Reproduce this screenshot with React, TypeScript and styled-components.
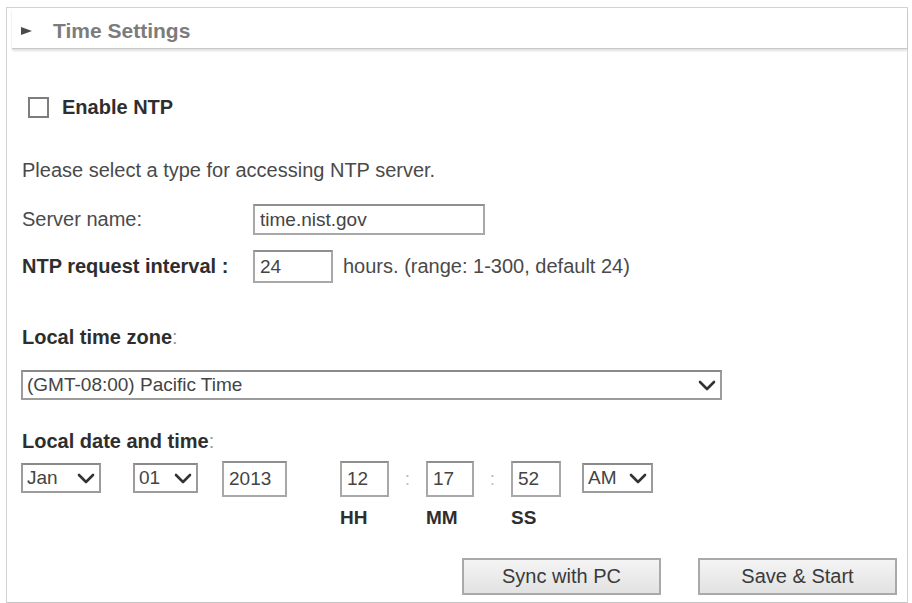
import React from 'react';
import styled, { createGlobalStyle } from 'styled-components';

const GlobalStyle = createGlobalStyle`
  html, body {
    margin: 0;
    padding: 0;
    background: #ffffff;
  }
  body {
    font-family: "Liberation Sans", Arial, sans-serif;
    color: #3a3a3a;
  }
`;

const ScPanel = styled.div`
  box-sizing: border-box;
  margin: 7px 0 0 6px;
  width: 902px;
  height: 596px;
  border: 1px solid #d2d2d2;
  border-bottom-color: #c4c4c4;
`;

const ScHeader = styled.div`
  display: flex;
  align-items: center;
  box-sizing: border-box;
  height: 41px;
  margin-left: 5px;
  padding: 6px 0 0 8px;
  border-bottom: 1px solid #c8c8c8;
  box-shadow: 0 2px 2px rgba(0, 0, 0, 0.12);
`;

const ScTriangle = styled.svg`
  width: 13px;
  height: 10px;
  margin-right: 20px;
`;

const ScTitle = styled.span`
  font-size: 21px;
  font-weight: bold;
  color: #7c7c7c;
`;

const ScContent = styled.div`
  padding: 0 10px 0 14px;
`;

const ScRow = styled.div<{ $mt: number; $h: number }>`
  display: flex;
  align-items: center;
  margin-top: ${p => p.$mt}px;
  height: ${p => p.$h}px;
  font-size: 20px;
`;

const ScCheckbox = styled.span`
  box-sizing: border-box;
  width: 21px;
  height: 21px;
  margin-left: 7px;
  margin-right: 13px;
  border: 2px solid #7d7d7d;
  background: #fff;
`;

const ScBold = styled.span`
  font-weight: bold;
  color: #2e2e2e;
`;

const ScText = styled.span<{ $ml?: number }>`
  margin-left: ${p => p.$ml ?? 0}px;
  color: #4a4a4a;
`;

const ScLabel = styled.span<{ $w: number; $bold?: boolean }>`
  box-sizing: border-box;
  width: ${p => p.$w}px;
  padding-left: 1px;
  font-weight: ${p => (p.$bold ? 'bold' : 'normal')};
  color: ${p => (p.$bold ? '#2e2e2e' : '#4a4a4a')};
`;

const ScLight = styled.span`
  color: #9a9a9a;
`;

const ScInput = styled.div<{ $w: number; $h: number }>`
  box-sizing: border-box;
  display: flex;
  align-items: center;
  width: ${p => p.$w}px;
  height: ${p => p.$h}px;
  padding-left: 5px;
  border: 2px solid #a8a8a8;
  border-top-color: #8f8f8f;
  font-size: 19px;
  color: #444;
  background: #fff;
`;

const ScSelect = styled.div<{ $w: number }>`
  box-sizing: border-box;
  display: flex;
  align-items: center;
  justify-content: space-between;
  width: ${p => p.$w}px;
  height: 30px;
  padding: 0 4px 0 4px;
  border: 2px solid #9c9c9c;
  border-top-color: #8a8a8a;
  font-size: 19px;
  color: #444;
  background: #fff;
`;

const ScChevron = styled.svg`
  width: 18px;
  height: 11px;
  flex: none;
`;

const ScDateRow = styled.div`
  display: flex;
  align-items: flex-start;
  margin-top: 10px;
`;

const ScField = styled.div<{ $ml: number }>`
  display: flex;
  flex-direction: column;
  margin-left: ${p => p.$ml}px;
`;

const ScUnit = styled.span`
  margin-top: 12px;
  font-size: 19px;
  font-weight: bold;
  color: #2e2e2e;
  line-height: 18px;
`;

const ScSelectSlot = styled.div<{ $ml: number }>`
  margin-top: 2px;
  margin-left: ${p => p.$ml}px;
`;

const ScColon = styled.span`
  width: 37px;
  height: 36px;
  display: flex;
  align-items: center;
  justify-content: center;
  font-size: 19px;
  color: #bdbdbd;
`;

const ScButtons = styled.div`
  display: flex;
  justify-content: flex-end;
  gap: 37px;
  margin-top: 31px;
`;

const ScButton = styled.button`
  box-sizing: border-box;
  width: 199px;
  height: 37px;
  border: 2px solid #a9a9a9;
  border-radius: 0;
  background: linear-gradient(#f4f4f4, #e2e2e2);
  font-family: "Liberation Sans", Arial, sans-serif;
  font-size: 20px;
  color: #3a3a3a;
  padding: 0;
`;

function Chevron(): JSX.Element {
  return (
    <ScChevron viewBox="0 0 18 11">
      <path d="M2 2 L9 9 L16 2" fill="none" stroke="#333" strokeWidth="2.6" strokeLinecap="round" strokeLinejoin="round" />
    </ScChevron>
  );
}

export default function App(): JSX.Element {
  return <>
    <GlobalStyle />
    <ScPanel>
      <ScHeader>
        <ScTriangle viewBox="0 0 13 10">
          <path d="M1 1 L12 5 L1 9 Z" fill="#4a4a4a" />
        </ScTriangle>
        <ScTitle>Time Settings</ScTitle>
      </ScHeader>
      <ScContent>
        <ScRow $mt={47} $h={22}>
          <ScCheckbox />
          <ScBold>Enable NTP</ScBold>
        </ScRow>
        <ScRow $mt={42} $h={20}>
          <ScText $ml={1}>Please select a type for accessing NTP server.</ScText>
        </ScRow>
        <ScRow $mt={24} $h={31}>
          <ScLabel $w={232}>Server name:</ScLabel>
          <ScInput $w={232} $h={31}>time.nist.gov</ScInput>
        </ScRow>
        <ScRow $mt={15} $h={33}>
          <ScLabel $w={232} $bold>NTP request interval :</ScLabel>
          <ScInput $w={80} $h={33}>24</ScInput>
          <ScText $ml={10}>hours. (range: 1-300, default 24)</ScText>
        </ScRow>
        <ScRow $mt={44} $h={20}>
          <ScText $ml={1}><ScBold>Local time zone</ScBold><ScLight>:</ScLight></ScText>
        </ScRow>
        <ScRow $mt={23} $h={30}>
          <ScSelect $w={701}>
            <span>(GMT-08:00) Pacific Time</span>
            <Chevron />
          </ScSelect>
        </ScRow>
        <ScRow $mt={31} $h={20}>
          <ScText $ml={1}><ScBold>Local date and time</ScBold><ScLight>:</ScLight></ScText>
        </ScRow>
        <ScDateRow>
          <ScSelectSlot $ml={0}>
            <ScSelect $w={80}>
              <span>Jan</span>
              <Chevron />
            </ScSelect>
          </ScSelectSlot>
          <ScSelectSlot $ml={32}>
            <ScSelect $w={65}>
              <span>01</span>
              <Chevron />
            </ScSelect>
          </ScSelectSlot>
          <ScField $ml={24}>
            <ScInput $w={65} $h={36}>2013</ScInput>
          </ScField>
          <ScField $ml={53}>
            <ScInput $w={49} $h={36}>12</ScInput>
            <ScUnit>HH</ScUnit>
          </ScField>
          <ScColon>:</ScColon>
          <ScField $ml={0}>
            <ScInput $w={48} $h={36}>17</ScInput>
            <ScUnit>MM</ScUnit>
          </ScField>
          <ScColon>:</ScColon>
          <ScField $ml={0}>
            <ScInput $w={50} $h={36}>52</ScInput>
            <ScUnit>SS</ScUnit>
          </ScField>
          <ScSelectSlot $ml={21}>
            <ScSelect $w={71}>
              <span>AM</span>
              <Chevron />
            </ScSelect>
          </ScSelectSlot>
        </ScDateRow>
        <ScButtons>
          <ScButton>Sync with PC</ScButton>
          <ScButton>Save &amp; Start</ScButton>
        </ScButtons>
      </ScContent>
    </ScPanel>
  </>;
}
